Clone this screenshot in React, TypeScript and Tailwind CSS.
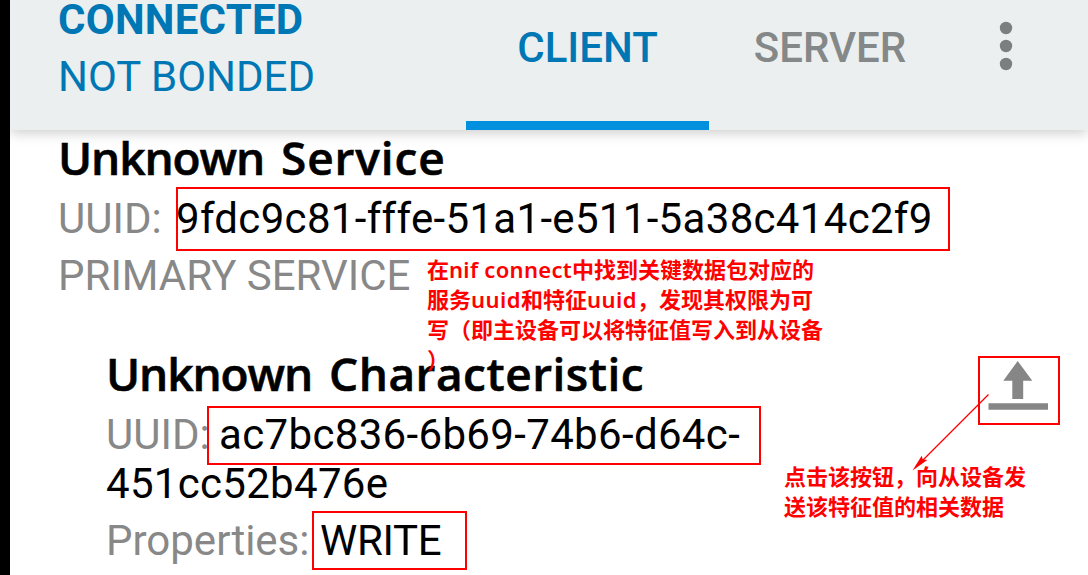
import type { ReactNode } from "react";

const note =
  "absolute whitespace-nowrap font-['Noto_Sans_CJK_SC',sans-serif] text-[22px] leading-[30px] font-bold text-[#ff0000]";

function Latin({ children, className }: { children: ReactNode; className: string }) {
  return <span className={`inline-block font-['Noto_Sans',sans-serif] leading-none font-semibold ${className}`}>{children}</span>;
}

function Heading({ children }: { children: ReactNode }) {
  return (
    <h2 className="h-[64px] font-['Open_Sans',sans-serif] text-[46px] leading-[55px] font-semibold [-webkit-text-stroke:0.6px_black]">
      <span className="mr-[5px] tracking-[-1.1px]">Unknown</span> {children}
    </h2>
  );
}

function Header() {
  return (
    <header className="relative flex h-[130px] bg-[#ebefef] shadow-[0_3px_12px_rgba(0,0,0,0.2)]">
      <div className="w-[456px] pl-12 text-[#0077b5]">
        <div className="-mt-[5px] h-[57px] text-[42px] leading-[50px] font-bold tracking-[0.25px]">CONNECTED</div>
        <div className="text-[42px] leading-[50px]">NOT BONDED</div>
      </div>
      <nav className="flex text-[42px] leading-[50px] font-medium">
        <div className="h-full w-[243px] border-b-9 border-[#0090de] pt-[23px] text-center text-[#0077b5]">CLIENT</div>
        <div className="w-[242px] pt-[23px] text-center text-[#858888]">SERVER</div>
      </nav>
      <svg className="mt-[21px] ml-[48px] h-[50px] w-[14px]" viewBox="0 0 14 50" fill="#7b7f80">
        <circle cx="7" cy="7" r="6.2" />
        <circle cx="7" cy="25" r="6.2" />
        <circle cx="7" cy="43" r="6.2" />
      </svg>
    </header>
  );
}

export default function App() {
  return (
    <div className="relative h-[575px] w-[1088px] overflow-hidden border-l-10 border-black bg-white font-['Roboto',sans-serif] whitespace-nowrap">
      <Header />
      <main className="text-[42px] leading-[50px] text-black">
        <section className="pl-12">
          <Heading><span className="tracking-[0.9px]">Service</span></Heading>
          <p className="flex h-[57px]">
            <span className="w-[118px] text-[#888]">UUID:</span>
            <span className="tracking-[0.32px]">9fdc9c81-fffe-51a1-e511-5a38c414c2f9</span>
          </p>
          <p className="h-[95px] text-[#888]">PRIMARY SERVICE</p>
        </section>
        <section className="flex justify-between pr-[40px] pl-24">
          <div>
            <Heading><span className="tracking-[0.5px]">Characteristic</span></Heading>
            <p className="flex h-[49px]">
              <span className="w-[113px] text-[#888]">UUID:</span>
              <span className="tracking-[0.34px]">ac7bc836-6b69-74b6-d64c-</span>
            </p>
            <p className="h-[57px] tracking-[0.3px]">451cc52b476e</p>
            <p className="flex">
              <span className="w-[214px] text-[#888]">Properties:</span>
              <span className="tracking-[-0.3px]">WRITE</span>
            </p>
          </div>
          <svg className="mt-[14px] h-[50px] w-[60px]" viewBox="0 0 60 50" fill="#868686">
            <path d="M29.7 1 44.3 20.7H35.2V39H24.3V20.7H15.3Z" />
            <path d="M.5 43.2H60V49.8H.5Z" />
          </svg>
        </section>
      </main>

      <div className="absolute top-[187px] left-[166px] h-[64px] w-[774px] border-2 border-[#ff0000]" />
      <div className="absolute top-[406px] left-[197px] h-[59px] w-[554px] border-2 border-[#ff0000]" />
      <div className="absolute top-[511px] left-[302px] h-[59px] w-[155px] border-2 border-[#ff0000]" />
      <div className="absolute top-[356px] left-[968px] h-[69px] w-[82px] border-2 border-[#ff0000]" />
      <svg className="absolute top-[390px] left-[898px] h-[84px] w-[84px]" viewBox="0 0 84 84">
        <path d="M80.5 4.5 14 71" stroke="#ff0000" strokeWidth="1.2" />
        <path d="M4.5 80.5 13.7 65.7 14.7 69.3 19.3 70Z" fill="#ff0000" />
      </svg>
      <div className={`${note} top-[253px] left-[417px]`}>
        <div>在<Latin className="w-[123px] tracking-[0.3px]">nif connect</Latin>中找到关键数据包对应的</div>
        <div>服务<Latin className="w-[50px] tracking-[0.5px]">uuid</Latin>和特征<Latin className="w-[50px] tracking-[0.5px]">uuid</Latin>，发现其权限为可</div>
        <div>写（即主设备可以将特征值写入到从设备</div>
        <div>）</div>
      </div>
      <div className={`${note} top-[460px] left-[774px]`}>
        <div>点击该按钮，向从设备发</div>
        <div>送该特征值的相关数据</div>
      </div>
    </div>
  );
}
